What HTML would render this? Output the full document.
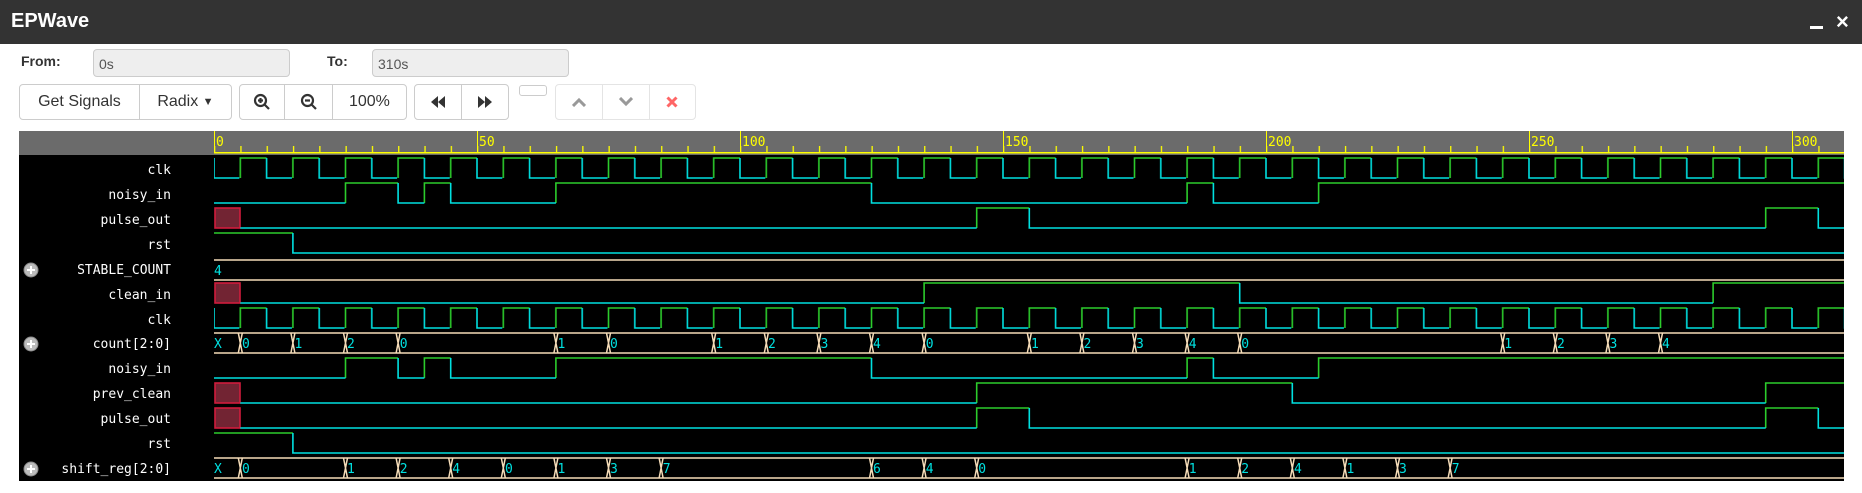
<!DOCTYPE html>
<html><head><meta charset="utf-8"><style>
*{margin:0;padding:0;box-sizing:border-box}
body{width:1862px;height:493px;background:#fff;font-family:"Liberation Sans",sans-serif;position:relative;overflow:hidden}
.title{position:absolute;left:0;top:0;width:1862px;height:44px;background:#333;color:#fff}
.title b{position:absolute;left:11px;top:10px;font-size:20px}
.lbl{position:absolute;font-size:14px;font-weight:bold;color:#333}
.inp{position:absolute;top:49px;height:28px;background:#eee;border:1px solid #ccc;border-radius:4px;color:#555;font-size:14px;padding:6px 5px}
.grp{position:absolute;top:84px;height:36px;border:1px solid #ccc;border-radius:4px;display:flex;background:#fff}
.grp div{height:100%;display:flex;align-items:center;justify-content:center;border-right:1px solid #ccc;font-size:16px;color:#333}
.grp div:last-child{border-right:none}
</style></head><body>
<div class="title"><b>EPWave</b>
<div style="position:absolute;left:1810px;top:26px;width:13px;height:3px;background:#fff"></div>
<div style="position:absolute;left:1836px;top:9px;font-size:22px;font-weight:bold;color:#fff">×</div></div>
<div class="lbl" style="left:21px;top:53px">From:</div>
<div class="inp" style="left:93px;width:197px">0s</div>
<div class="lbl" style="left:327px;top:53px">To:</div>
<div class="inp" style="left:372px;width:197px">310s</div>
<div class="grp" style="left:19px;width:213px"><div style="width:121px">Get Signals</div><div style="width:92px">Radix&nbsp;<span style="font-size:11px">▼</span></div></div>
<div class="grp" style="left:239px;width:168px"><div style="width:46px"><svg width="18" height="18" viewBox="0 0 18 18"><circle cx="7.5" cy="7.5" r="5.5" fill="none" stroke="#333" stroke-width="2.2"/><path d="M11.5 11.5l4.5 4.5M5 7.5h5M7.5 5v5" stroke="#333" stroke-width="2.2"/></svg></div><div style="width:48px"><svg width="18" height="18" viewBox="0 0 18 18"><circle cx="7.5" cy="7.5" r="5.5" fill="none" stroke="#333" stroke-width="2.2"/><path d="M11.5 11.5l4.5 4.5M5 7.5h5" stroke="#333" stroke-width="2.2"/></svg></div><div style="width:74px">100%</div></div>
<div class="grp" style="left:414px;width:95px"><div style="width:48px"><svg width="16" height="14"><path d="M8 1L1 7l7 6zM15 1L8 7l7 6z" fill="#333"/></svg></div><div style="width:47px"><svg width="16" height="14"><path d="M1 1l7 6-7 6zM8 1l7 6-7 6z" fill="#333"/></svg></div></div>
<div style="position:absolute;left:519px;top:85px;width:28px;height:11px;border:1px solid #ccc;border-radius:3px"></div>
<div class="grp" style="left:555px;width:141px;border-color:#e4e4e4"><div style="width:48px;border-color:#e4e4e4"><svg width="14" height="10"><path d="M1 9l6-6 6 6" fill="none" stroke="#999" stroke-width="3"/></svg></div><div style="width:47px;border-color:#e4e4e4"><svg width="14" height="10"><path d="M1 1l6 6 6-6" fill="none" stroke="#999" stroke-width="3"/></svg></div><div style="width:46px"><svg width="12" height="12"><path d="M1.5 1.5l9 9M10.5 1.5l-9 9" stroke="#f66" stroke-width="3"/></svg></div></div>

<svg style="position:absolute;left:0;top:0" width="1862" height="493">
<defs>
<pattern id="clk" patternUnits="userSpaceOnUse" x="239.3" y="-1" width="52.6" height="22">
<path d="M1 21V1H27.3" fill="none" stroke="#2ccc2c" stroke-width="1.6"/>
<path d="M27.3 1V21H53.6" fill="none" stroke="#00e0e0" stroke-width="1.6"/>
</pattern>
<pattern id="tk" patternUnits="userSpaceOnUse" x="214" y="146" width="26.3" height="7">
<rect x="0" y="0" width="1.3" height="7" fill="#ff0"/>
</pattern>
</defs>
<rect x="19" y="131" width="1825" height="24" fill="#6b6b6b"/>
<rect x="214" y="146" width="1630" height="7" fill="url(#tk)"/>
<rect x="214" y="152" width="1630" height="1.5" fill="#ff0"/>
<g fill="#ff0" font-family="'DejaVu Sans Mono',monospace" font-size="13">
<rect x="214" y="131" width="1" height="22"/><text x="216" y="146">0</text>
<rect x="477" y="131" width="1" height="22"/><text x="479" y="146">50</text>
<rect x="740" y="131" width="1" height="22"/><text x="742" y="146">100</text>
<rect x="1003" y="131" width="1" height="22"/><text x="1005" y="146">150</text>
<rect x="1266" y="131" width="1" height="22"/><text x="1268" y="146">200</text>
<rect x="1529" y="131" width="1" height="22"/><text x="1531" y="146">250</text>
<rect x="1792" y="131" width="1" height="22"/><text x="1794" y="146">300</text>
</g>
<rect x="19" y="155" width="1825" height="326" fill="#000"/>
<g fill="#fff" font-family="'DejaVu Sans Mono',monospace" font-size="13" text-anchor="end">
<text x="171" y="174">clk</text><text x="171" y="199">noisy_in</text><text x="171" y="224">pulse_out</text><text x="171" y="249">rst</text>
<text x="171" y="274">STABLE_COUNT</text><text x="171" y="299">clean_in</text><text x="171" y="324">clk</text><text x="171" y="348">count[2:0]</text>
<text x="171" y="373">noisy_in</text><text x="171" y="398">prev_clean</text><text x="171" y="423">pulse_out</text><text x="171" y="448">rst</text><text x="171" y="473">shift_reg[2:0]</text>
</g>
<g>
<g transform="translate(31,270)"><circle r="7" fill="#bbb" stroke="#888"/><path d="M-4 0h8M0-4v8" stroke="#fff" stroke-width="2"/></g>
<g transform="translate(31,344)"><circle r="7" fill="#bbb" stroke="#888"/><path d="M-4 0h8M0-4v8" stroke="#fff" stroke-width="2"/></g>
<g transform="translate(31,469)"><circle r="7" fill="#bbb" stroke="#888"/><path d="M-4 0h8M0-4v8" stroke="#fff" stroke-width="2"/></g>
</g>
<g fill="none" stroke-width="1.6">
<rect transform="translate(0,158)" x="214" y="-1" width="1630" height="22" fill="url(#clk)" stroke="none"/>
<rect transform="translate(0,308)" x="214" y="-1" width="1630" height="22" fill="url(#clk)" stroke="none"/>
<g transform="translate(0,183)"><path stroke="#2ccc2c" d="M345.5 20V0H398.1M424.4 20V0H450.7M555.9 20V0H871.5M1187.1 20V0H1213.4M1318.6 20V0H1844"/><path stroke="#00e0e0" d="M214 20H345.5M398.1 0V20H424.4M450.7 0V20H555.9M871.5 0V20H1187.1M1213.4 0V20H1318.6"/></g>
<g transform="translate(0,358)"><path stroke="#2ccc2c" d="M345.5 20V0H398.1M424.4 20V0H450.7M555.9 20V0H871.5M1187.1 20V0H1213.4M1318.6 20V0H1844"/><path stroke="#00e0e0" d="M214 20H345.5M398.1 0V20H424.4M450.7 0V20H555.9M871.5 0V20H1187.1M1213.4 0V20H1318.6"/></g>
<g transform="translate(0,208)"><rect x="215" y="0" width="25" height="20" fill="#722433" stroke="#d01c3c"/><path stroke="#2ccc2c" d="M976.7 20V0H1029.3M1765.7 20V0H1818.3"/><path stroke="#00e0e0" d="M240.3 20H976.7M1029.3 0V20H1765.7M1818.3 0V20H1844"/></g>
<g transform="translate(0,408)"><rect x="215" y="0" width="25" height="20" fill="#722433" stroke="#d01c3c"/><path stroke="#2ccc2c" d="M976.7 20V0H1029.3M1765.7 20V0H1818.3"/><path stroke="#00e0e0" d="M240.3 20H976.7M1029.3 0V20H1765.7M1818.3 0V20H1844"/></g>
<g transform="translate(0,233)"><path stroke="#2ccc2c" d="M214 0H292.9"/><path stroke="#00e0e0" d="M292.9 0V20H1844"/></g>
<g transform="translate(0,433)"><path stroke="#2ccc2c" d="M214 0H292.9"/><path stroke="#00e0e0" d="M292.9 0V20H1844"/></g>
<g transform="translate(0,283)"><rect x="215" y="0" width="25" height="20" fill="#722433" stroke="#d01c3c"/><path stroke="#2ccc2c" d="M924.1 20V0H1239.7M1713.1 20V0H1844"/><path stroke="#00e0e0" d="M240.3 20H924.1M1239.7 0V20H1713.1"/></g>
<g transform="translate(0,383)"><rect x="215" y="0" width="25" height="20" fill="#722433" stroke="#d01c3c"/><path stroke="#2ccc2c" d="M976.7 20V0H1292.3M1765.7 20V0H1844"/><path stroke="#00e0e0" d="M240.3 20H976.7M1292.3 0V20H1765.7"/></g>
</g>
<g font-family="'DejaVu Sans Mono',monospace" font-size="13" fill="#00e0e0">
<g transform="translate(0,260)"><path d="M214 0H1844M214 20H1844" stroke="#f5dcb8" stroke-width="1.5"/><text x="214" y="15">4</text></g>
<g transform="translate(0,333)"><path d="M214 0H1844M214 20H1844" stroke="#f5dcb8" stroke-width="1.5"/>
<g stroke="#f5dcb8" stroke-width="1.5" fill="none"><path d="M238.3 0l2 10-2 10M242.3 0l-2 10 2 10M290.9 0l2 10-2 10M294.9 0l-2 10 2 10M343.5 0l2 10-2 10M347.5 0l-2 10 2 10M396.1 0l2 10-2 10M400.1 0l-2 10 2 10M553.9 0l2 10-2 10M557.9 0l-2 10 2 10M606.5 0l2 10-2 10M610.5 0l-2 10 2 10M711.7 0l2 10-2 10M715.7 0l-2 10 2 10M764.3 0l2 10-2 10M768.3 0l-2 10 2 10M816.9 0l2 10-2 10M820.9 0l-2 10 2 10M869.5 0l2 10-2 10M873.5 0l-2 10 2 10M922.1 0l2 10-2 10M926.1 0l-2 10 2 10M1027.3 0l2 10-2 10M1031.3 0l-2 10 2 10M1079.9 0l2 10-2 10M1083.9 0l-2 10 2 10M1132.5 0l2 10-2 10M1136.5 0l-2 10 2 10M1185.1 0l2 10-2 10M1189.1 0l-2 10 2 10M1237.7 0l2 10-2 10M1241.7 0l-2 10 2 10M1500.7 0l2 10-2 10M1504.7 0l-2 10 2 10M1553.3 0l2 10-2 10M1557.3 0l-2 10 2 10M1605.9 0l2 10-2 10M1609.9 0l-2 10 2 10M1658.5 0l2 10-2 10M1662.5 0l-2 10 2 10"/></g>
<text x="214" y="15">X</text><text x="242" y="15">0</text><text x="294.5" y="15">1</text><text x="347" y="15">2</text><text x="399.7" y="15">0</text><text x="557.5" y="15">1</text><text x="610" y="15">0</text><text x="715.3" y="15">1</text><text x="768" y="15">2</text><text x="820.5" y="15">3</text><text x="873" y="15">4</text><text x="925.7" y="15">0</text><text x="1031" y="15">1</text><text x="1083.5" y="15">2</text><text x="1136" y="15">3</text><text x="1188.7" y="15">4</text><text x="1241.3" y="15">0</text><text x="1504.3" y="15">1</text><text x="1557" y="15">2</text><text x="1609.5" y="15">3</text><text x="1662" y="15">4</text>
</g>
<g transform="translate(0,458)"><path d="M214 0H1844M214 20H1844" stroke="#f5dcb8" stroke-width="1.5"/>
<g stroke="#f5dcb8" stroke-width="1.5" fill="none"><path d="M238.3 0l2 10-2 10M242.3 0l-2 10 2 10M343.5 0l2 10-2 10M347.5 0l-2 10 2 10M396.1 0l2 10-2 10M400.1 0l-2 10 2 10M448.7 0l2 10-2 10M452.7 0l-2 10 2 10M501.3 0l2 10-2 10M505.3 0l-2 10 2 10M553.9 0l2 10-2 10M557.9 0l-2 10 2 10M606.5 0l2 10-2 10M610.5 0l-2 10 2 10M659.1 0l2 10-2 10M663.1 0l-2 10 2 10M869.5 0l2 10-2 10M873.5 0l-2 10 2 10M922.1 0l2 10-2 10M926.1 0l-2 10 2 10M974.7 0l2 10-2 10M978.7 0l-2 10 2 10M1185.1 0l2 10-2 10M1189.1 0l-2 10 2 10M1237.7 0l2 10-2 10M1241.7 0l-2 10 2 10M1290.3 0l2 10-2 10M1294.3 0l-2 10 2 10M1342.9 0l2 10-2 10M1346.9 0l-2 10 2 10M1395.5 0l2 10-2 10M1399.5 0l-2 10 2 10M1448.1 0l2 10-2 10M1452.1 0l-2 10 2 10"/></g>
<text x="214" y="15">X</text><text x="242" y="15">0</text><text x="347" y="15">1</text><text x="399.7" y="15">2</text><text x="452.3" y="15">4</text><text x="505" y="15">0</text><text x="557.5" y="15">1</text><text x="610" y="15">3</text><text x="662.7" y="15">7</text><text x="873" y="15">6</text><text x="925.7" y="15">4</text><text x="978.3" y="15">0</text><text x="1188.7" y="15">1</text><text x="1241.3" y="15">2</text><text x="1294" y="15">4</text><text x="1346.5" y="15">1</text><text x="1399" y="15">3</text><text x="1451.7" y="15">7</text>
</g>
</g>
</svg>
</body></html>
